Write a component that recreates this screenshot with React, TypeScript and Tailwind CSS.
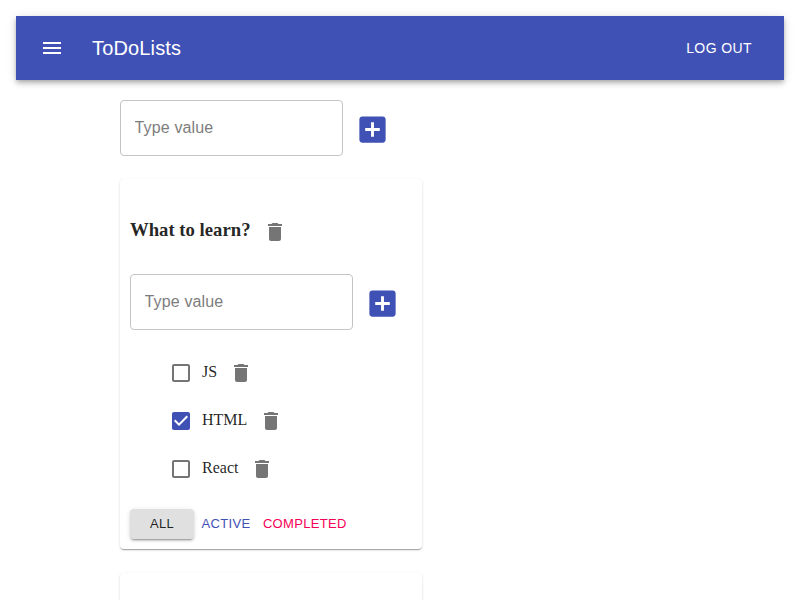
import React from 'react';

const DELETE = 'M6 19c0 1.1.9 2 2 2h8c1.1 0 2-.9 2-2V7H6v12zM19 4h-3.500l-1-1h-5l-1 1H5v2h14V4z';
const ADD = 'M19 3H5c-1.110 0-2 .9-2 2v14c0 1.100.890 2 2 2h14c1.100 0 2-.9 2-2V5c0-1.100-.9-2-2-2zm-2 10h-4v4h-2v-4H7v-2h4V7h2v4h4v2z';
const MENU = 'M3 18h18v-2H3v2zm0-5h18v-2H3v2zm0-7v2h18V6H3z';
const BOX = 'M19 5v14H5V5h14m0-2H5c-1.100 0-2 .9-2 2v14c0 1.100.9 2 2 2h14c1.100 0 2-.9 2-2V5c0-1.100-.9-2-2-2z';
const CHECKED = 'M19 3H5c-1.110 0-2 .9-2 2v14c0 1.100.890 2 2 2h14c1.110 0 2-.9 2-2V5c0-1.100-.890-2-2-2zm-9 14l-5-5 1.410-1.410L10 14.170l7.590-7.590L19 8l-9 9z';

function Icon({ path, className }: { path: string; className: string }) {
  return (
    <svg viewBox="0 0 24 24" fill="currentColor" className={`shrink-0 ${className}`}>
      <path d={path} />
    </svg>
  );
}

function AddItemForm() {
  return (
    <div className="flex h-14 items-center">
      <input
        placeholder="Type value"
        className="h-14 w-[223px] rounded border border-[#c4c4c4] bg-transparent px-[13.5px] pb-px font-['Liberation_Sans',sans-serif] text-base tracking-[0.15px] outline-none placeholder:text-[#7d7d7d]"
      />
      <button className="ml-3 mt-[3px]">
        <Icon path={ADD} className="size-[35px] text-[#3f51b5]" />
      </button>
    </div>
  );
}

function Task({ title, done }: { title: string; done: boolean }) {
  return (
    <li className="flex h-12 items-center">
      <Icon path={done ? CHECKED : BOX} className={done ? 'size-6 text-[#3f51b5]' : 'size-6 text-[#757575]'} />
      <span className="ml-[9px] pb-0.5">{title}</span>
      <Icon path={DELETE} className="ml-3 size-6 text-[#757575]" />
    </li>
  );
}

const paper = 'w-[302px] rounded bg-white p-2.5 shadow-[0px_2px_1px_-1px_rgba(0,0,0,0.2),0px_1px_1px_0px_rgba(0,0,0,0.14),0px_1px_3px_0px_rgba(0,0,0,0.12)]';

export default function App() {
  return (
    <div className="h-[600px] overflow-hidden bg-white p-4 font-['Liberation_Serif',serif] text-base text-black/87">
      <header className="flex h-16 items-center bg-[#3f51b5] px-6 font-['Liberation_Sans',sans-serif] text-white shadow-[0px_2px_4px_-1px_rgba(0,0,0,0.2),0px_4px_5px_0px_rgba(0,0,0,0.14),0px_1px_10px_0px_rgba(0,0,0,0.12)]">
        <Icon path={MENU} className="size-6" />
        <h1 className="ml-7 text-xl tracking-[0.15px]">ToDoLists</h1>
        <button className="ml-auto mr-2 text-sm tracking-[0.4px]">LOG OUT</button>
      </header>
      <main className="ml-[104px] mt-5">
        <AddItemForm />
        <section className={`mt-[23px] h-[370px] ${paper}`}>
          <div className="mt-[30px] flex h-6 items-center text-[18.72px] font-bold">
            <h3 className="pb-0.5">What to learn?</h3>
            <Icon path={DELETE} className="ml-3 mt-0.5 size-6 text-[#757575]" />
          </div>
          <div className="mt-[31px]"><AddItemForm /></div>
          <ul className="ml-[39px] mt-[19px]">
            <Task title="JS" done={false} />
            <Task title="HTML" done />
            <Task title="React" done={false} />
          </ul>
          <div className="mt-4 flex h-[30px] font-['Liberation_Sans',sans-serif] text-[13px] tracking-[0.32px]">
            <button className="w-16 rounded bg-[#e0e0e0] shadow-[0px_3px_1px_-2px_rgba(0,0,0,0.2),0px_2px_2px_0px_rgba(0,0,0,0.14),0px_1px_5px_0px_rgba(0,0,0,0.12)]">ALL</button>
            <button className="ml-[7.5px] text-[#3f51b5]">ACTIVE</button>
            <button className="ml-[12.5px] text-[#f50057]">COMPLETED</button>
          </div>
        </section>
        <section className={`mt-6 h-[370px] ${paper}`} />
      </main>
    </div>
  );
}
